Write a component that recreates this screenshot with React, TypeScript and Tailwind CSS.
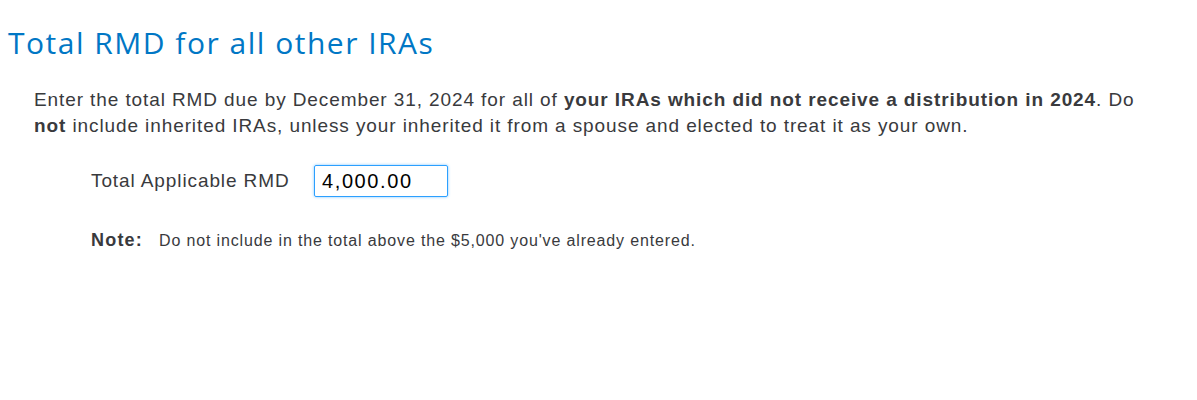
export default function App() {
  return (
    <div className="min-h-[400px] bg-white text-[#393a3d]" style={{ fontFamily: '"Liberation Sans", Arial, sans-serif' }}>
      <h1
        className="px-[8px] pt-[23px] text-[30px] leading-[40px] tracking-[1.5px] text-[#0077c5]"
        style={{ fontFamily: '"Open Sans", Lato, sans-serif' }}
      >
        Total RMD for all other IRAs
      </h1>
      <div className="pl-[34px] pr-[40px] pt-[24px]">
        <p className="text-[19px] leading-[26px] tracking-[0.9px]">
          Enter the total RMD due by December 31, 2024 for all of{" "}
          <strong className="font-bold">your IRAs which did not receive a distribution in 2024</strong>. Do{" "}
          <strong className="font-bold">not</strong> include inherited IRAs, unless your inherited it from a spouse
          and elected to treat it as your own.
        </p>
        <div className="mt-[26px] flex items-center pl-[57px]">
          <label className="w-[223px] text-[19px] tracking-[0.9px]">Total Applicable RMD</label>
          <input
            type="text"
            defaultValue="4,000.00"
            className="h-[32px] w-[134px] rounded-[2px] border border-[#2ca0ff] px-[7px] text-[20px] tracking-[1.6px] text-black shadow-[0_0_3px_#7cc4ff] outline-none"
          />
        </div>
        <div className="mt-[30px] flex items-baseline pl-[57px]">
          <span className="w-[68px] text-[18px] tracking-[1.2px] font-bold">Note:</span>
          <span className="text-[16px] tracking-[0.85px]">Do not include in the total above the $5,000 you've already entered.</span>
        </div>
      </div>
    </div>
  );
}
